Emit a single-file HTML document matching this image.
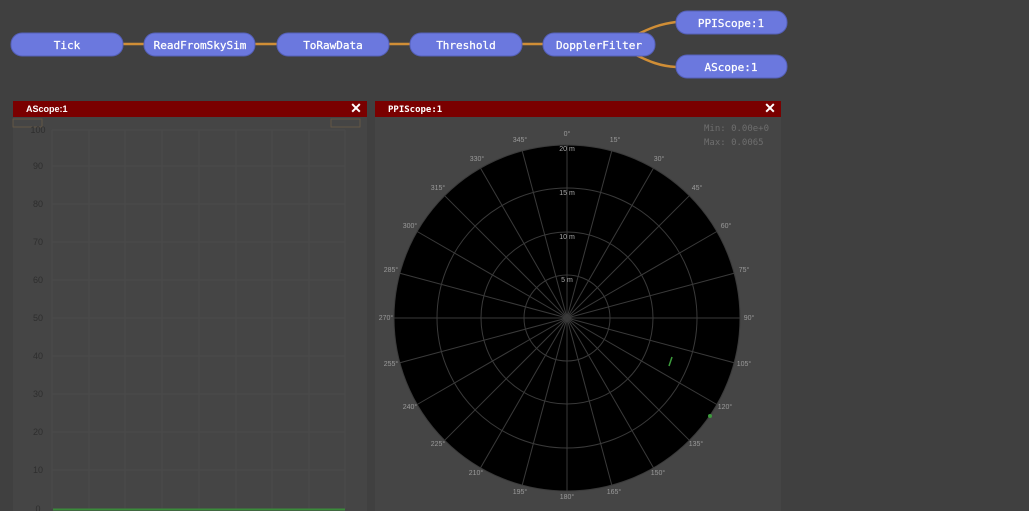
<!DOCTYPE html>
<html><head><style>
body{margin:0;width:1029px;height:511px;overflow:hidden;background:#404040;font-family:"DejaVu Sans Mono","Liberation Mono",monospace;}
</style></head><body>
<svg width="1029" height="511" viewBox="0 0 1029 511" xmlns="http://www.w3.org/2000/svg" style="position:absolute;left:0;top:0">
<g stroke="#d08e36" stroke-width="2.5" fill="none">
<line x1="123" y1="44" x2="144" y2="44"/>
<line x1="255" y1="44" x2="277" y2="44"/>
<line x1="389" y1="44" x2="410" y2="44"/>
<line x1="522" y1="44" x2="543" y2="44"/>
<path d="M634 36 C650 28,660 24,676 22"/>
<path d="M634 54 C650 62,660 66,676 67"/>
</g>
<g fill="#6b78de" stroke="#5560b8" stroke-width="1">
<rect x="11" y="33" width="112" height="23" rx="11"/>
<rect x="144" y="33" width="111" height="23" rx="11"/>
<rect x="277" y="33" width="112" height="23" rx="11"/>
<rect x="410" y="33" width="112" height="23" rx="11"/>
<rect x="543" y="33" width="112" height="23" rx="11"/>
<rect x="676" y="11" width="111" height="23" rx="11"/>
<rect x="676" y="55" width="111" height="23" rx="11"/>
</g>
<g fill="#fff" font-size="11" text-anchor="middle" font-family="DejaVu Sans Mono,monospace" stroke="#fff" stroke-width="0.25">
<text x="67" y="49">Tick</text>
<text x="200" y="49">ReadFromSkySim</text>
<text x="333" y="49">ToRawData</text>
<text x="466" y="49">Threshold</text>
<text x="599" y="49">DopplerFilter</text>
<text x="731" y="27">PPIScope:1</text>
<text x="731" y="71">AScope:1</text>
</g>
<!-- left panel -->
<rect x="13" y="101" width="354" height="410" fill="#454545"/>
<rect x="13" y="101" width="354" height="16" fill="#7a0000"/>
<text x="26" y="112" fill="#fff" font-size="9" font-weight="bold" font-family="Liberation Sans,sans-serif">AScope:1</text>
<text x="356" y="113" fill="#fff" font-size="14" font-weight="bold" text-anchor="middle" font-family="Liberation Sans,sans-serif">✕</text>
<rect x="13" y="119" width="29" height="8" fill="none" stroke="#6a5a45" stroke-width="0.8"/>
<rect x="331" y="119" width="29" height="8" fill="none" stroke="#6a5a45" stroke-width="0.8"/>
<g stroke="#4a4a4a" stroke-width="1">
<line x1="52" y1="130" x2="345" y2="130"/><line x1="52" y1="166" x2="345" y2="166"/><line x1="52" y1="204" x2="345" y2="204"/><line x1="52" y1="242" x2="345" y2="242"/><line x1="52" y1="280" x2="345" y2="280"/><line x1="52" y1="318" x2="345" y2="318"/><line x1="52" y1="356" x2="345" y2="356"/><line x1="52" y1="394" x2="345" y2="394"/><line x1="52" y1="432" x2="345" y2="432"/><line x1="52" y1="470" x2="345" y2="470"/>
<line x1="52" y1="130" x2="52" y2="509"/><line x1="89" y1="130" x2="89" y2="509"/><line x1="125" y1="130" x2="125" y2="509"/><line x1="162" y1="130" x2="162" y2="509"/><line x1="199" y1="130" x2="199" y2="509"/><line x1="236" y1="130" x2="236" y2="509"/><line x1="272" y1="130" x2="272" y2="509"/><line x1="309" y1="130" x2="309" y2="509"/><line x1="345" y1="130" x2="345" y2="509"/>
</g>
<line x1="53" y1="509.5" x2="345" y2="509.5" stroke="#3a8a3a" stroke-width="2"/>
<g fill="#2e2e2e" font-size="9" text-anchor="middle" font-family="Liberation Sans,sans-serif">
<text x="38" y="133">100</text><text x="38" y="169">90</text><text x="38" y="207">80</text><text x="38" y="245">70</text><text x="38" y="283">60</text><text x="38" y="321">50</text><text x="38" y="359">40</text><text x="38" y="397">30</text><text x="38" y="435">20</text><text x="38" y="473">10</text><text x="38" y="512">0</text>
</g>
<!-- right panel -->
<rect x="375" y="101" width="406" height="410" fill="#454545"/>
<rect x="375" y="101" width="406" height="16" fill="#7a0000"/>
<text x="388" y="112" fill="#fff" font-size="9" font-weight="bold" font-family="DejaVu Sans Mono,monospace">PPIScope:1</text>
<text x="770" y="113" fill="#fff" font-size="14" font-weight="bold" text-anchor="middle" font-family="Liberation Sans,sans-serif">✕</text>
<g fill="#6e6e6e" font-size="9" font-family="DejaVu Sans Mono,monospace"><text x="704" y="131">Min: 0.00e+0</text><text x="704" y="145">Max: 0.0065</text></g>
<circle cx="567" cy="318" r="173" fill="#000"/>
<g stroke="#3a3a3a" stroke-width="1" fill="none">
<circle cx="567" cy="318" r="43"/><circle cx="567" cy="318" r="86"/><circle cx="567" cy="318" r="130"/><circle cx="567" cy="318" r="173"/>
<g id="sp"><line x1="567" y1="145" x2="567" y2="491"/></g>
<use href="#sp" transform="rotate(15 567 318)"/><use href="#sp" transform="rotate(30 567 318)"/><use href="#sp" transform="rotate(45 567 318)"/><use href="#sp" transform="rotate(60 567 318)"/><use href="#sp" transform="rotate(75 567 318)"/><use href="#sp" transform="rotate(90 567 318)"/><use href="#sp" transform="rotate(105 567 318)"/><use href="#sp" transform="rotate(120 567 318)"/><use href="#sp" transform="rotate(135 567 318)"/><use href="#sp" transform="rotate(150 567 318)"/><use href="#sp" transform="rotate(165 567 318)"/>
</g>
<line x1="669" y1="366" x2="672" y2="357" stroke="#3c9a3c" stroke-width="1.5"/>
<circle cx="710" cy="416" r="2" fill="#3c9a3c"/>
<g fill="#aaa" font-size="7" text-anchor="middle" font-family="Liberation Sans,sans-serif">
<text x="567" y="151">20 m</text><text x="567" y="195">15 m</text><text x="567" y="239">10 m</text><text x="567" y="282">5 m</text>
</g>
<g fill="#9a9a9a" font-size="7" text-anchor="middle" font-family="Liberation Sans,sans-serif">
<text x="567" y="136">0°</text><text x="615" y="142">15°</text><text x="659" y="161">30°</text><text x="697" y="190">45°</text><text x="726" y="228">60°</text><text x="744" y="272">75°</text><text x="749" y="320">90°</text><text x="744" y="366">105°</text><text x="725" y="409">120°</text><text x="696" y="446">135°</text><text x="658" y="475">150°</text><text x="614" y="494">165°</text><text x="567" y="499">180°</text><text x="520" y="494">195°</text><text x="476" y="475">210°</text><text x="438" y="446">225°</text><text x="410" y="409">240°</text><text x="391" y="366">255°</text><text x="386" y="320">270°</text><text x="391" y="272">285°</text><text x="410" y="228">300°</text><text x="438" y="190">315°</text><text x="477" y="161">330°</text><text x="520" y="142">345°</text>
</g>
</svg>
</body></html>
